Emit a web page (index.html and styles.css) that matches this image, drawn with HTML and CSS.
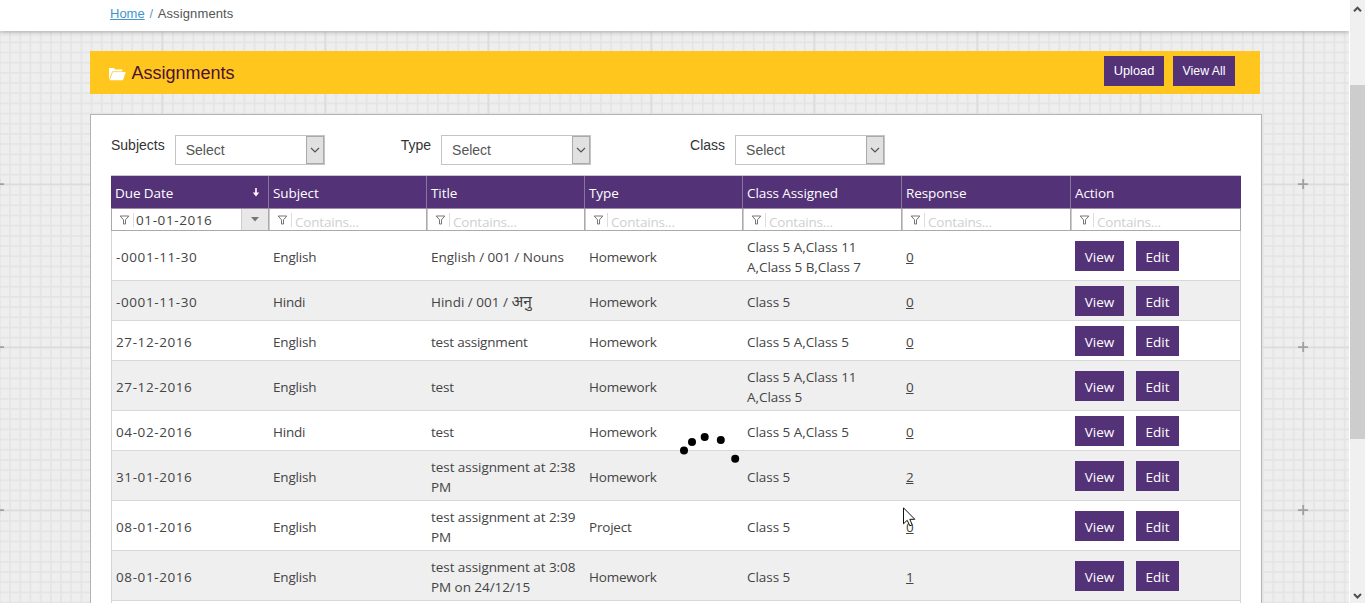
FILE: index.html
```html
<!DOCTYPE html>
<html lang="en">
<head>
<meta charset="utf-8">
<title>Assignments</title>
<link rel="stylesheet" href="styles.css">
</head>
<body>
<svg class="backdrop" width="1349" height="603" aria-hidden="true">
  <defs>
    <pattern id="cell" x="-1" y="21" width="10.1875" height="10.1875" patternUnits="userSpaceOnUse">
      <path d="M0 .8H10.2M.8 0V10.2" stroke="#e4e4e4" stroke-width="1.6"/>
    </pattern>
    <pattern id="tile" x="-83" y="-61" width="163" height="163" patternUnits="userSpaceOnUse">
      <path d="M0 82.2H163M82.2 0V163" stroke="#dcdcdc" stroke-width="1.6"/>
      <path d="M77 82.2H87M82.2 77V87" stroke="#a0a0a0" stroke-width="1.8"/>
    </pattern>
  </defs>
  <rect width="1349" height="603" fill="#eeeeee"/>
  <rect width="1349" height="603" fill="url(#cell)"/>
  <rect width="1349" height="603" fill="url(#tile)"/>
</svg>
<svg class="symbols" width="0" height="0">
  <symbol id="funnel" viewBox="0 0 10 10"><path d="M.7 1H9.3L6 4.8V9H4V4.8Z" fill="none" stroke="#666" stroke-width=".9"/></symbol>
  <symbol id="chev" viewBox="0 0 10 6"><path d="M1 1L5 5L9 1" fill="none" stroke="#555" stroke-width="1.2"/></symbol>
</svg>
<div class="screen">
  <div class="page">
    <nav class="crumbs"><a href="#">Home</a><i>/</i><span>Assignments</span></nav>
    <header class="titlebar">
      <svg width="18" height="14" viewBox="0 0 18 14"><path d="M1 12V1.6Q1 1 1.6 1H6L7 2.5H14.2V4.5H4.3L1.5 12Z" fill="#fff"/><path d="M4.8 5H17.7L15 13.2H1.5Z" fill="#fff"/><path d="M1.6 12L4.5 4.7H14" fill="none" stroke="#ffd55a" stroke-width=".6"/></svg>
      <h1>Assignments</h1>
      <div class="tools"><a class="btn up">Upload</a><a class="btn all">View All</a></div>
    </header>
    <main class="panel">
      <div class="filters">
        <div class="field subj"><label>Subjects</label><div class="select"><span>Select</span><b><svg width="10" height="6"><use href="#chev"/></svg></b></div></div>
        <div class="field type"><label>Type</label><div class="select"><span>Select</span><b><svg width="10" height="6"><use href="#chev"/></svg></b></div></div>
        <div class="field"><label>Class</label><div class="select"><span>Select</span><b><svg width="10" height="6"><use href="#chev"/></svg></b></div></div>
      </div>
      <div class="table">
        <div class="row head">
          <div class="due"><span>Due Date</span><svg width="8" height="10" viewBox="0 0 8 10"><path d="M4 0V6" stroke="#fff" stroke-width="1.6"/><path d="M.8 4.6H7.2L4 8.6Z" fill="#fff"/></svg></div>
          <div>Subject</div><div>Title</div><div>Type</div><div>Class Assigned</div><div>Response</div><div>Action</div>
        </div>
        <div class="row search">
          <div class="date"><svg width="11" height="10"><use href="#funnel"/></svg><span>01-01-2016</span><b><svg width="8" height="5"><path d="M0 0H8L4 4.5Z" fill="#777"/></svg></b></div>
          <div><svg width="11" height="10"><use href="#funnel"/></svg><span>Contains...</span></div>
          <div><svg width="11" height="10"><use href="#funnel"/></svg><span>Contains...</span></div>
          <div><svg width="11" height="10"><use href="#funnel"/></svg><span>Contains...</span></div>
          <div><svg width="11" height="10"><use href="#funnel"/></svg><span>Contains...</span></div>
          <div><svg width="11" height="10"><use href="#funnel"/></svg><span>Contains...</span></div>
          <div><svg width="11" height="10"><use href="#funnel"/></svg><span>Contains...</span></div>
        </div>
        <div class="row tall"><div class="d">-0001-11-30</div><div>English</div><div class="n">English / 001 / Nouns</div><div>Homework</div><div class="c">Class 5 A,Class 11<br>A,Class 5 B,Class 7</div><div><u>0</u></div><div class="act"><a class="btn">View</a><a class="btn">Edit</a></div></div>
        <div class="row alt"><div class="d">-0001-11-30</div><div>Hindi</div><div class="n">Hindi / 001 / <span class="deva">अनु</span></div><div>Homework</div><div class="c">Class 5</div><div><u>0</u></div><div class="act"><a class="btn">View</a><a class="btn">Edit</a></div></div>
        <div class="row"><div class="d">27-12-2016</div><div>English</div><div>test assignment</div><div>Homework</div><div class="c">Class 5 A,Class 5</div><div><u>0</u></div><div class="act"><a class="btn">View</a><a class="btn">Edit</a></div></div>
        <div class="row tall alt"><div class="d">27-12-2016</div><div>English</div><div>test</div><div>Homework</div><div class="c">Class 5 A,Class 11<br>A,Class 5</div><div><u>0</u></div><div class="act"><a class="btn">View</a><a class="btn">Edit</a></div></div>
        <div class="row"><div class="d">04-02-2016</div><div>Hindi</div><div>test</div><div>Homework</div><div class="c">Class 5 A,Class 5</div><div><u>0</u></div><div class="act"><a class="btn">View</a><a class="btn">Edit</a></div></div>
        <div class="row tall alt"><div class="d">31-01-2016</div><div>English</div><div class="t">test assignment at 2:38<br>PM</div><div>Homework</div><div class="c">Class 5</div><div><u>2</u></div><div class="act"><a class="btn">View</a><a class="btn">Edit</a></div></div>
        <div class="row tall"><div class="d">08-01-2016</div><div>English</div><div class="t">test assignment at 2:39<br>PM</div><div>Project</div><div class="c">Class 5</div><div><u>0</u></div><div class="act"><a class="btn">View</a><a class="btn">Edit</a></div></div>
        <div class="row tall alt"><div class="d">08-01-2016</div><div>English</div><div class="t">test assignment at 3:08<br>PM on 24/12/15</div><div>Homework</div><div class="c">Class 5</div><div><u>1</u></div><div class="act"><a class="btn">View</a><a class="btn">Edit</a></div></div>
        <div class="row"></div>
      </div>
    </main>
  </div>
  <aside class="scroll">
    <svg width="15" height="17" viewBox="0 0 15 17"><path d="M4 11.2L7.5 7.7L11 11.2" fill="none" stroke="#505050" stroke-width="2"/></svg>
    <div class="thumb"></div>
    <svg width="15" height="17" viewBox="0 0 15 17"><path d="M4 8L7.5 11.5L11 8" fill="none" stroke="#505050" stroke-width="2"/></svg>
  </aside>
</div>
<svg class="loader" width="64" height="36" viewBox="0 0 64 36"><circle cx="6" cy="20.5" r="4"/><circle cx="14" cy="12" r="4"/><circle cx="26.7" cy="7" r="4"/><circle cx="42.8" cy="10" r="4"/><circle cx="57.2" cy="28.8" r="4"/></svg>
<svg class="cursor" width="13" height="20" viewBox="0 0 13 20"><path d="M.5 .8V16.8L4.2 13.3L6.8 18.8L9.2 17.8L6.8 12.3H11.8Z" fill="#fff" stroke="#111"/></svg>
</body>
</html>
```
FILE: styles.css
```css
* { box-sizing: border-box; }
body { margin: 0; height: 603px; overflow: hidden; font: 14px/20px "Liberation Sans", Arial, sans-serif; color: #333; }
.backdrop { position: absolute; left: 0; top: 0; z-index: -1; }
.symbols { position: absolute; }
.screen { display: grid; grid-template-columns: 1349px 16px; height: 603px; overflow: hidden; }
.page { height: 603px; overflow: hidden; }
.crumbs { display: flex; height: 31px; padding: 4px 0 0 110px; background: #fff; box-shadow: 0 1px 5px rgba(0,0,0,.25); font-size: 13px; }
.crumbs a { color: #3f96cf; text-underline-offset: 1px; }
.crumbs i { width: 13px; font-style: normal; text-align: center; color: #5e9ec4; }
.crumbs span { color: #555; letter-spacing: .12px; }
.titlebar { display: flex; align-items: center; width: 1170px; height: 43px; margin: 20px 0 0 90px; padding: 0 25px 0 18px; background: #ffc61e; }
.titlebar h1 { margin: 0 0 0 5.5px; font-size: 18px; font-weight: 400; color: #4c1130; }
.titlebar svg { margin-top: 2px; }
.tools { display: flex; gap: 9px; margin: 0 0 4px auto; font-size: 12.8px; }
.btn { display: flex; height: 30px; align-items: center; justify-content: center; background: #543277; color: #fff; }
.up { width: 60px; }
.all { width: 62px; font-size: 12.3px; }
.panel { width: 1172px; height: 520px; margin: 20px 0 0 90px; padding: 20px; border: 1px solid #b3b3b3; background: #fff; }
.filters { display: flex; height: 40px; }
.field { display: flex; gap: 10px; }
.subj { margin-right: 76px; }
.type { margin-right: 99px; }
.field label { color: #333; }
.select { display: flex; width: 150px; height: 30px; border: 1px solid #c4c4c4; background: #fff; color: #555; }
.select span { flex: 1; padding: 4px 0 0 10px; }
.select b { display: flex; width: 18px; align-items: center; justify-content: center; border: 1px solid #aaa; background: #e1e1e1; }
.table { width: 1130px; border: 1px solid #d5d5d5; border-top-color: #c8c8c8; color: #444; font-family: "Open Sans", "Noto Sans", sans-serif; font-size: 13.5px; letter-spacing: -.2px; }
.row { display: grid; grid-template-columns: 157px 158px 158px 158px 159px 169px 1fr; height: 40px; align-items: center; border-bottom: 1px solid #d8d8d8; background: #fff; }
.row > div { padding: 3px 0 0 4px; white-space: nowrap; }
.row.tall { height: 50px; }
.row.alt { background: #efefef; }
.row .d { letter-spacing: .6px; }
.row .c { letter-spacing: -.04px; }
.row .n { letter-spacing: 0; }
.row .t { letter-spacing: -.06px; }
.deva { font-size: 15.5px; line-height: 18px; }
.row .act { display: flex; gap: 12px; padding: 0 0 0 4px; letter-spacing: 0; }
.act .btn { width: 49px; padding-top: 2px; }
.act .btn + .btn { width: 43px; }
.row.head { height: 33px; align-items: stretch; width: 1130px; margin-left: -1px; grid-template-columns: 157px 158px 158px 158px 159px 169px 1fr; background: #543277; color: #fff; border-bottom-color: #9b8ba9; letter-spacing: -.08px; }
.row.head > div { padding: 7px 0 0 4px; }
.row.head > div + div { border-left: 1px solid #85779a; }
.head .due { display: flex; justify-content: space-between; padding-right: 8px; }
.row.head .due { padding-right: 8px; }
.due svg { margin-top: 5px; }
.row.search { height: 22px; width: 1130px; margin-left: -1px; grid-template-columns: 157px 158px 158px 158px 159px 169px 1fr; align-items: stretch; border-bottom-color: #aaa; }
.row.search > div { display: flex; align-items: center; gap: 3px; padding: 0 0 0 8px; border-left: 1px solid #aaa; box-shadow: inset 1px 0 #ccc; color: #d0d0d0; }
.row.search > div:first-child { padding-left: 7px; box-shadow: none; }
.row.search > div:last-child { border-right: 1px solid #aaa; }
.row.search span { height: 14px; padding: 0 0 0 3px; border-left: 1px solid #ddd; line-height: 18px; }
.row.search .date { color: #444; }
.row.search .date span { flex: 1; line-height: 14px; padding-left: 2px; letter-spacing: .6px; }
.search b { display: flex; width: 27px; height: 21px; align-items: center; justify-content: center; border-left: 1px solid #ccc; background: #e8e8e8; }
.scroll { display: flex; flex-direction: column; height: 603px; border-left: 1px solid #fff; background: #f0f0f0; }
.thumb { height: 354px; margin: 68px 0 147px; background: #cdcdcd; }
.loader { position: absolute; left: 678px; top: 430px; }
.cursor { position: absolute; left: 903px; top: 507px; }
```
